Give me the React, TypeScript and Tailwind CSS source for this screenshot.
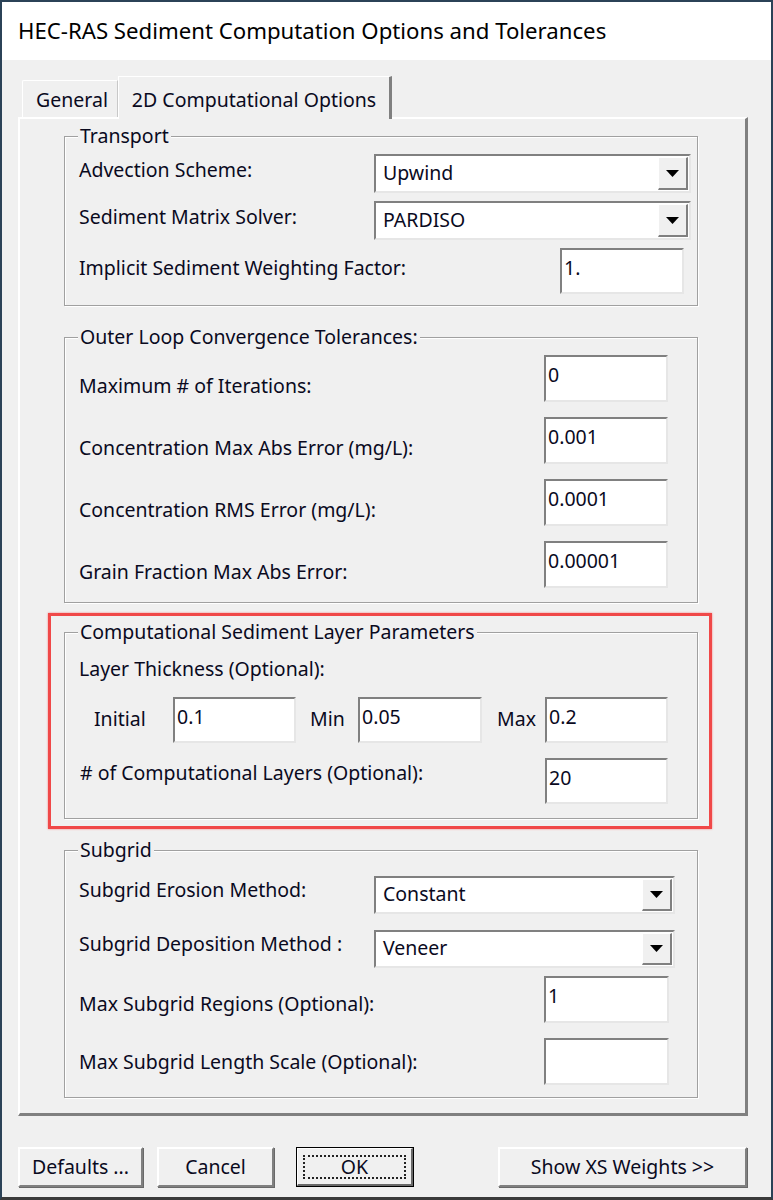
import React from "react";

const sunken =
  "border-2 border-t-[#808080] border-l-[#808080] border-b-[#e6e6e6] border-r-[#e6e6e6] bg-white";

function TextBox({ value, w, h }: { value: string; w: string; h: string }) {
  return (
    <div className={`${sunken} ${w} ${h} shrink-0 pl-[2px] pt-[7px] leading-[22px]`}>
      {value}
    </div>
  );
}

function Combo({ value, w, h }: { value: string; w: string; h: string }) {
  return (
    <div className={`${sunken} ${w} ${h} shrink-0 flex items-stretch`}>
      <div className="flex-1 flex items-center pl-[7px] pb-[2px]">{value}</div>
      <div className="w-[30px] m-[1px] flex items-center justify-center bg-[#f0f0f0] border-t border-l border-white border-r-2 border-b-2 border-r-[#808080] border-b-[#808080]">
        <svg width="13" height="7" viewBox="0 0 13 7">
          <path d="M0 0 L13 0 L6.5 7 Z" fill="#000" />
        </svg>
      </div>
    </div>
  );
}

function Group({
  title,
  h,
  children,
  className = "",
}: {
  title: string;
  h: string;
  children: React.ReactNode;
  className?: string;
}) {
  return (
    <div
      className={`relative w-[634px] ${h} border border-[#a0a0a0] shadow-[inset_1px_1px_0_#fff,1px_1px_0_#fff] ${className}`}
    >
      <span className="absolute left-[13px] top-[-13px] bg-[#f0f0f0] px-[2px] leading-[24px]">
        {title}
      </span>
      {children}
    </div>
  );
}

function Button({ label, w, isDefault }: { label: string; w: string; isDefault?: boolean }) {
  if (isDefault) {
    return (
      <div className={`${w} h-[40px] border border-black`}>
        <div className="h-full flex items-center justify-center bg-[#f0f0f0] border-t border-l border-white border-r-2 border-b-2 border-r-[#696969] border-b-[#696969]">
          <div className="w-[103px] h-[24px] border-2 border-dotted border-[#222] flex items-center justify-center leading-none">
            {label}
          </div>
        </div>
      </div>
    );
  }
  return (
    <div
      className={`${w} h-[40px] flex items-center justify-center bg-[#f0f0f0] border-t-2 border-l-2 border-white border-r-2 border-b-2 border-r-[#808080] border-b-[#808080] shadow-[1px_1px_0_#696969]`}
    >
      {label}
    </div>
  );
}

export default function App() {
  return (
    <div className="w-[773px] h-[1200px] bg-[#2b4257] border-x-2 border-t-2 border-[#2b4257] border-b-[3px] border-b-[#3a3a3a] flex flex-col font-['Noto_Sans','Segoe_UI',sans-serif] text-[19.5px] text-[#0a0a1e]">
      {/* title bar */}
      <div className="h-[58px] shrink-0 bg-white flex items-center pl-[16px] text-[22.2px] text-black">
        HEC-RAS Sediment Computation Options and Tolerances
      </div>

      <div className="flex-1 bg-[#f0f0f0] pl-[16px] pt-[16px]">
        {/* tabs */}
        <div className="flex items-end pl-[4px] h-[41px]">
          <div className="w-[96px] h-[37px] border-t border-l border-white rounded-tl-[2px] border-r border-r-[#c8c8c8] flex items-center justify-center pt-[2px] pl-[4px]">
            General
          </div>
          <div className="relative z-10 w-[274px] h-[43px] -mb-[2px] bg-[#f0f0f0] border-t border-l border-white border-r-[3px] border-r-[#808080] flex items-start justify-center pt-[8px]">
            2D Computational Options
          </div>
        </div>

        {/* panel */}
        <div className="w-[730px] h-[999px] border-t-2 border-l-2 border-white border-r-[3px] border-b-[3px] border-r-[#808080] border-b-[#808080] pl-[44px] pt-[17px]">
          <Group title="Transport" h="h-[170px]">
            <div className="flex flex-col pt-[17px] gap-[8px]">
              <div className="flex items-center justify-between pl-[14px] pr-[6px]">
                <span className="pb-[8px]">Advection Scheme:</span>
                <Combo value="Upwind" w="w-[317px]" h="h-[39px]" />
              </div>
              <div className="flex items-center justify-between pl-[14px] pr-[6px]">
                <span className="pb-[8px]">Sediment Matrix Solver:</span>
                <Combo value="PARDISO" w="w-[317px]" h="h-[39px]" />
              </div>
              <div className="flex items-center justify-between pl-[14px] pr-[13px]">
                <span className="pb-[6px]">Implicit Sediment Weighting Factor:</span>
                <TextBox value="1." w="w-[124px]" h="h-[46px]" />
              </div>
            </div>
          </Group>

          <Group title="Outer Loop Convergence Tolerances:" h="h-[266px]" className="mt-[31px]">
            <div className="flex flex-col pt-[17px] gap-[15px]">
              {[
                ["Maximum # of Iterations:", "0"],
                ["Concentration Max Abs Error (mg/L):", "0.001"],
                ["Concentration RMS Error (mg/L):", "0.0001"],
                ["Grain Fraction Max Abs Error:", "0.00001"],
              ].map(([label, value]) => (
                <div key={label} className="flex items-center justify-between pl-[14px] pr-[29px]">
                  <span className="pt-[14px]">{label}</span>
                  <TextBox value={value} w="w-[124px]" h="h-[47px]" />
                </div>
              ))}
            </div>
          </Group>

          {/* highlighted group */}
          <div className="relative mt-[29px]">
            <div className="absolute left-[-16px] top-[-19px] w-[664px] h-[216px] border-[3px] border-[#f04848] shadow-[0_0_2px_#f48080] pointer-events-none" />
            <Group title="Computational Sediment Layer Parameters" h="h-[187px]">
              <div className="flex flex-col pl-[14px] pt-[24px]">
                <span className="leading-[24px]">Layer Thickness (Optional):</span>
                <div className="flex items-center mt-[16px]">
                  <span className="w-[94px] pl-[15px] pb-[2px]">Initial</span>
                  <TextBox value="0.1" w="w-[123px]" h="h-[46px]" />
                  <span className="w-[62px] pl-[14px] pb-[2px]">Min</span>
                  <TextBox value="0.05" w="w-[124px]" h="h-[46px]" />
                  <span className="w-[63px] pl-[15px] pb-[2px]">Max</span>
                  <TextBox value="0.2" w="w-[123px]" h="h-[46px]" />
                </div>
                <div className="flex items-center justify-between pr-[29px] mt-[15px]">
                  <span className="pb-[16px] pl-[1px]"># of Computational Layers (Optional):</span>
                  <TextBox value="20" w="w-[123px]" h="h-[46px]" />
                </div>
              </div>
            </Group>
          </div>

          <Group title="Subgrid" h="h-[248px]" className="mt-[31px]">
            <div className="flex flex-col pt-[25px]">
              <div className="flex items-center justify-between h-[38px] pl-[14px] pr-[22px]">
                <span className="pb-[10px]">Subgrid Erosion Method:</span>
                <Combo value="Constant" w="w-[301px]" h="h-[38px]" />
              </div>
              <div className="flex items-center justify-between h-[38px] pl-[14px] pr-[22px] mt-[16px]">
                <span className="pb-[10px]">Subgrid Deposition Method :</span>
                <Combo value="Veneer" w="w-[301px]" h="h-[38px]" />
              </div>
              <div className="flex items-center justify-between pl-[14px] pr-[28px] mt-[8px]">
                <span className="pt-[8px]">Max Subgrid Regions (Optional):</span>
                <TextBox value="1" w="w-[125px]" h="h-[47px]" />
              </div>
              <div className="flex items-center justify-between pl-[14px] pr-[28px] mt-[15px]">
                <span className="pt-[0px]">Max Subgrid Length Scale (Optional):</span>
                <TextBox value="" w="w-[125px]" h="h-[47px]" />
              </div>
            </div>
          </Group>
        </div>

        {/* buttons */}
        <div className="flex items-center mt-[31px]">
          <Button label="Defaults ..." w="w-[125px]" />
          <div className="ml-[14px]">
            <Button label="Cancel" w="w-[117px]" />
          </div>
          <div className="ml-[22px]">
            <Button label="OK" w="w-[118px]" isDefault />
          </div>
          <div className="ml-[84px]">
            <Button label="Show XS Weights >>" w="w-[249px]" />
          </div>
        </div>
      </div>
    </div>
  );
}
